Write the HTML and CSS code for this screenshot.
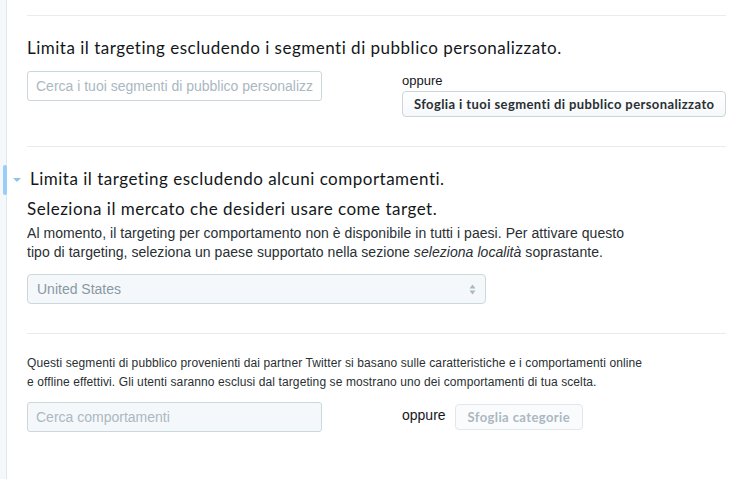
FILE: index.html
```html
<!DOCTYPE html>
<html lang="it">
<head>
  <meta charset="UTF-8" />
  <title>Targeting escluso</title>
  <link rel="stylesheet" href="styles.css">
</head>
<body>
  <div class="card">
    <div class="rule"></div>

    <!-- Segmenti di pubblico personalizzato -->
    <section class="block">
      <h2 class="title">Limita il targeting escludendo i segmenti di pubblico personalizzato.</h2>
      <div class="search-row">
        <input class="search" type="text" placeholder="Cerca i tuoi segmenti di pubblico personalizzato" />
        <div class="alt alt-stacked">
          <span class="or">oppure</span>
          <button class="btn">Sfoglia i tuoi segmenti di pubblico personalizzato</button>
        </div>
      </div>
    </section>

    <div class="rule rule-wide"></div>

    <!-- Comportamenti -->
    <section class="block block-open">
      <span class="accent"></span>
      <h2 class="title title-toggle"><span class="caret"></span>Limita il targeting escludendo alcuni comportamenti.</h2>
      <h3 class="subtitle">Seleziona il mercato che desideri usare come target.</h3>
      <p class="note">Al momento, il targeting per comportamento non è disponibile in tutti i paesi. Per attivare questo<br>tipo di targeting, seleziona un paese supportato nella sezione <em>seleziona località</em> soprastante.</p>
      <div class="select">
        <span>United States</span>
        <svg class="select-arrows" width="7" height="11" viewBox="0 0 7 11">
          <path d="M3.5 0.5 L6.5 4.5 L0.5 4.5 Z" fill="#aab8c2"/>
          <path d="M3.5 10.5 L6.5 6.5 L0.5 6.5 Z" fill="#aab8c2"/>
        </svg>
      </div>

      <div class="rule rule-inner"></div>

      <p class="small">Questi segmenti di pubblico provenienti dai partner Twitter si basano sulle caratteristiche e i comportamenti online<br>e offline effettivi. Gli utenti saranno esclusi dal targeting se mostrano uno dei comportamenti di tua scelta.</p>
      <div class="search-row">
        <input class="search search-disabled" type="text" placeholder="Cerca comportamenti" disabled />
        <div class="alt alt-inline">
          <span class="or or-big">oppure</span>
          <button class="btn btn-disabled" disabled>Sfoglia categorie</button>
        </div>
      </div>
    </section>
  </div>
</body>
</html>
```

FILE: styles.css
```css
html, body {
  margin: 0;
  padding: 0;
  background-color: #f5f8fa;
}
body {
  font-family: "Liberation Sans", Arial, sans-serif;
  color: #292f33;
  overflow: hidden;
}
.card {
  position: relative;
  margin-left: 6px;
  border-left: 1px solid #e1e8ed;
  background: #fff;
  min-height: 479px;
  padding: 15px 20px 0 20px;
  box-sizing: border-box;
}
.rule {
  border-top: 1px solid #e6ecf0;
}
.rule-wide {
  margin-top: 29px;
}
.rule-inner {
  margin-top: 29px;
}

.block {
  position: relative;
}
.title {
  font-family: Lato, "Liberation Sans", sans-serif;
  font-weight: normal;
  font-size: 17px;
  line-height: 22px;
  letter-spacing: 0.5px;
  color: #14171a;
  margin: 0;
}
.block .title {
  padding-top: 21px;
}
.title-toggle {
  position: relative;
  padding-left: 3px;
}
.caret {
  position: absolute;
  left: -14px;
  top: 31px;
  border-left: 4px solid transparent;
  border-right: 4px solid transparent;
  border-top: 4px solid #8ec3f0;
}
.accent {
  position: absolute;
  left: -24px;
  top: 18px;
  width: 4px;
  height: 30px;
  background: #9ccdf6;
  border-radius: 2px;
}
.subtitle {
  font-family: Lato, "Liberation Sans", sans-serif;
  font-weight: normal;
  font-size: 17px;
  line-height: 22px;
  letter-spacing: 0.5px;
  color: #14171a;
  margin: 8px 0 0;
}
.note {
  font-size: 14px;
  line-height: 19px;
  letter-spacing: 0.05px;
  margin: 4px 0 0;
  color: #292f33;
}
.small {
  font-size: 12px;
  line-height: 19px;
  letter-spacing: 0.1px;
  margin: 20px 0 0;
  color: #292f33;
}

.search-row {
  display: flex;
  align-items: flex-start;
  margin-top: 12px;
}
.block-open .search-row {
  margin-top: 10px;
}
.search {
  width: 295px;
  height: 30px;
  box-sizing: border-box;
  border: 1px solid #ccd6dd;
  border-radius: 3px;
  padding: 0 8px;
  font-family: "Liberation Sans", Arial, sans-serif;
  font-size: 14px;
  color: #292f33;
  background: #fff;
  flex: none;
}
.search::placeholder {
  color: #aab8c2;
}
.search-disabled {
  background: #f5f8fa;
}
.alt {
  margin-left: 80px;
}
.alt-stacked {
  display: flex;
  flex-direction: column;
  align-items: flex-start;
  margin-top: 1px;
}
.alt-stacked .or {
  margin-bottom: 2px;
}
.alt-inline {
  display: flex;
  align-items: center;
  gap: 9px;
  margin-top: 2px;
}
.or {
  font-size: 13px;
  line-height: 17px;
  color: #14171a;
}
.or-big {
  font-size: 14px;
  margin-top: -3px;
}
.btn {
  font-family: Lato, "Liberation Sans", sans-serif;
  font-weight: bold;
  font-size: 13px;
  height: 26px;
  padding: 0 11px;
  color: #292f33;
  border: 1px solid #ccd6dd;
  border-radius: 4px;
  background: linear-gradient(#fff, #f5f8fa);
  letter-spacing: 0.4px;
  white-space: nowrap;
}
.btn-disabled {
  color: #aab8c2;
  background: #fafbfc;
  border-color: #e1e8ed;
  padding: 0 12px;
}

.select {
  display: flex;
  align-items: center;
  justify-content: space-between;
  width: 459px;
  height: 30px;
  box-sizing: border-box;
  margin-top: 12px;
  padding: 0 9px;
  border: 1px solid #ccd6dd;
  border-radius: 4px;
  background: #f5f8fa;
  font-size: 14px;
  color: #8899a6;
}
```
